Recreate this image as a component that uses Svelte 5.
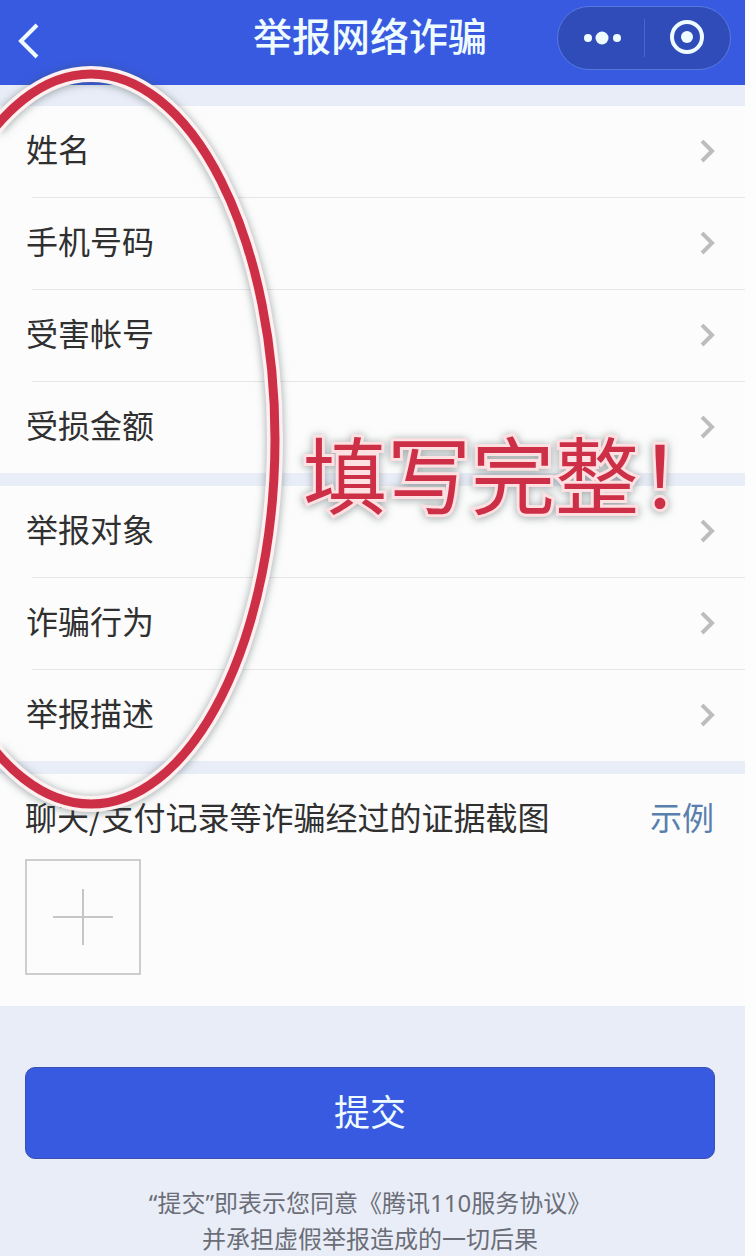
<script>
	const groups = [
		['姓名', '手机号码', '受害帐号', '受损金额'],
		['举报对象', '诈骗行为', '举报描述']
	];
</script>

<main>
	<header>
		<button class="back" aria-label="返回">
			<svg width="24" height="38" viewBox="0 0 24 38"><path d="M20 3L4 19L20 35" fill="none" stroke="#f0fbff" stroke-width="4" /></svg>
		</button>
		<h1>举报网络诈骗</h1>
		<div class="capsule">
			<button aria-label="更多">
				<svg width="40" height="16" viewBox="0 0 40 16" fill="#effcff">
					<circle cx="7" cy="8" r="4" />
					<circle cx="21" cy="8" r="6.5" />
					<circle cx="36" cy="8" r="4" />
				</svg>
			</button>
			<button aria-label="关闭">
				<svg width="36" height="36" viewBox="0 0 36 36">
					<circle cx="18" cy="17" r="15" fill="none" stroke="#effcff" stroke-width="4" />
					<circle cx="18" cy="17" r="6" fill="#effcff" />
				</svg>
			</button>
		</div>
	</header>

	{#each groups as rows}
		<ul class="group">
			{#each rows as row}
				<li>
					<a class="row" href="#top">
						<span>{row}</span>
						<svg width="16" height="24" viewBox="0 0 16 24"><path d="M2 1L12 11L2 21" fill="none" stroke="#bdbdbd" stroke-width="4" /></svg>
					</a>
				</li>
			{/each}
		</ul>
	{/each}

	<section class="evidence">
		<div class="evidence-head">
			<h2>聊天/支付记录等诈骗经过的证据截图</h2>
			<a href="#top">示例</a>
		</div>
		<button class="upload" aria-label="添加图片">
			<svg width="60" height="60" viewBox="0 0 60 60"><path d="M0 30H60M30 2V58" stroke="#c6c6c6" stroke-width="2" /></svg>
		</button>
	</section>

	<footer>
		<button class="submit">提交</button>
		<p>“提交”即表示您同意《腾讯110服务协议》<br>并承担虚假举报造成的一切后果</p>
	</footer>

	<!-- hand-drawn note on top of the form -->
	<svg class="ring" width="300" height="760" viewBox="0 0 300 760" fill="none">
		<ellipse cx="91" cy="381" rx="184" ry="365" stroke="#fdf0f0" stroke-width="16" />
		<ellipse cx="91" cy="381" rx="184" ry="365" stroke="#cc2f46" stroke-width="9" />
	</svg>
	<strong class="note">填写完整！</strong>
</main>

<style>
	:global(body) {
		background: #fdfdfd;
	}

	main {
		position: relative;
		overflow: hidden;
		margin-right: 11px;
		background: #e9edf7;
		color: #303030;
		font-family: "Noto Sans CJK SC", sans-serif;
		font-size: 32px;
	}

	button {
		display: flex;
		align-items: center;
		justify-content: center;
		padding: 0;
		border: 0;
		background: none;
		font-family: inherit;
		cursor: pointer;
	}

	a {
		text-decoration: none;
	}

	h1, h2, p, ul {
		margin: 0;
		padding: 0;
		font-weight: 400;
	}

	header {
		display: grid;
		grid-template-columns: 1fr auto 1fr;
		align-items: center;
		height: 85px;
		padding: 0 14px 10px 9px;
		box-sizing: border-box;
		background: #385ae0;
	}

	h1 {
		padding-bottom: 8px;
		color: #effcff;
		font-size: 39px;
		font-weight: 500;
		line-height: 56px;
	}

	.back {
		justify-self: start;
		width: 40px;
		height: 44px;
		padding-top: 6px;
	}

	.capsule {
		display: flex;
		justify-self: end;
		width: 174px;
		height: 64px;
		box-sizing: border-box;
		border: 1px solid #5878df;
		border-radius: 32px;
		background: #304cb9;
	}

	.capsule button {
		flex: 1;
		position: relative;
	}

	.capsule button + button::before {
		content: "";
		position: absolute;
		left: 0;
		top: 12px;
		bottom: 12px;
		width: 1px;
		background: #4b66c9;
	}

	.group {
		margin-top: 13px;
		list-style: none;
		background: #fcfcfc;
	}

	header + .group {
		margin-top: 21px;
	}

	.row {
		display: flex;
		align-items: center;
		justify-content: space-between;
		height: 91px;
		padding: 0 29px 0 26px;
		color: inherit;
	}

	.row span {
		padding-bottom: 8px;
	}

	li + li::before {
		content: "";
		display: block;
		height: 1px;
		margin-left: 32px;
		background: #e6e6e6;
	}

	.evidence {
		margin-top: 13px;
		padding: 18px 31px 31px 25px;
		background: #fcfcfc;
	}

	.evidence-head {
		display: flex;
		justify-content: space-between;
		line-height: 48px;
	}

	h2 {
		font-size: 32px;
	}

	.evidence-head a {
		color: #587fae;
	}

	.upload {
		width: 116px;
		height: 116px;
		margin-top: 19px;
		border: 2px solid #cdcdcd;
	}

	footer {
		padding: 61px 30px 0 25px;
	}

	.submit {
		width: 100%;
		height: 92px;
		padding-bottom: 6px;
		border: 1px solid #3c4fae;
		border-radius: 10px;
		background: #385ae0;
		color: #effcff;
		font-size: 36px;
	}

	p {
		margin-top: 26px;
		color: #6b6d77;
		font-family: "Noto Sans", "Noto Sans CJK SC", sans-serif;
		font-size: 24px;
		line-height: 36px;
		text-align: center;
	}

	.ring {
		position: absolute;
		left: 0;
		top: 58px;
		pointer-events: none;
		filter: drop-shadow(0 1px 4px rgba(60, 80, 80, 0.5));
	}

	.note {
		position: absolute;
		left: 303px;
		top: 410px;
		color: #cc2f46;
		font-size: 84px;
		font-weight: 400;
		line-height: 124px;
		white-space: nowrap;
		pointer-events: none;
		paint-order: stroke fill;
		-webkit-text-stroke: 6px #fde0e2;
		filter: drop-shadow(0 1px 4px rgba(60, 80, 80, 0.5));
	}
</style>
